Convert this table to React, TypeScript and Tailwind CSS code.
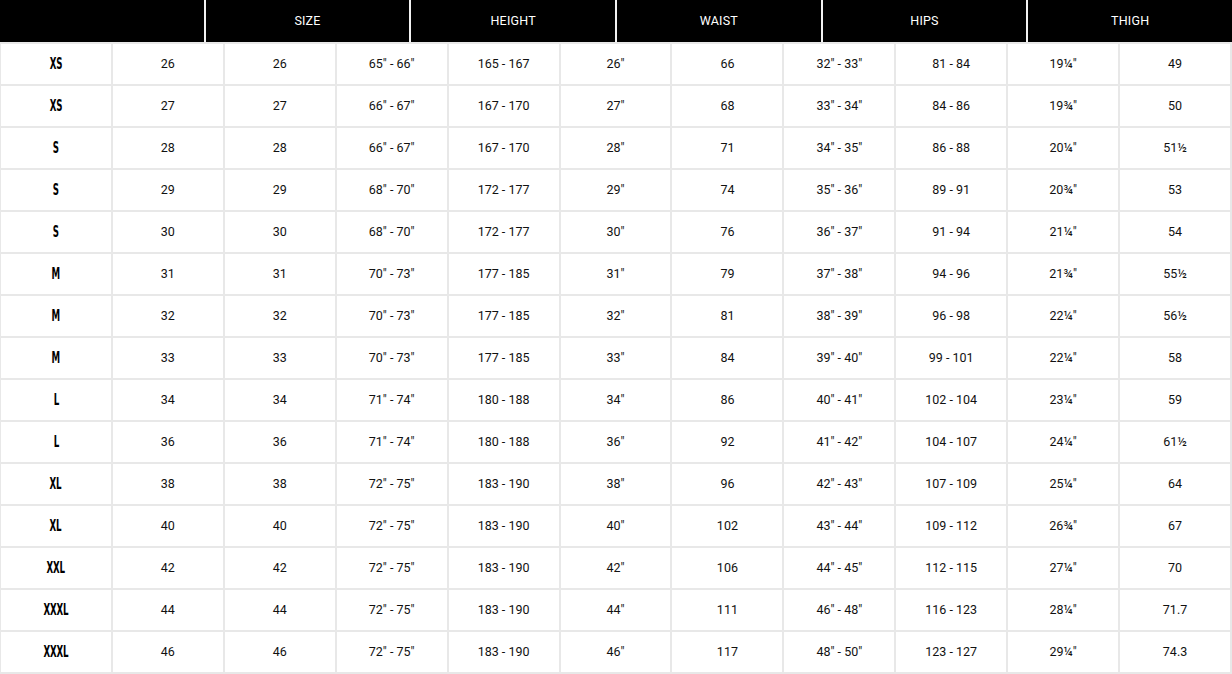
import React from "react";

const headers = ["", "SIZE", "HEIGHT", "WAIST", "HIPS", "THIGH"];

const rows: string[][] = [
  ["XS", "26", "26", "65\" - 66\"", "165 - 167", "26\"", "66", "32\" - 33\"", "81 - 84", "19¼\"", "49"],
  ["XS", "27", "27", "66\" - 67\"", "167 - 170", "27\"", "68", "33\" - 34\"", "84 - 86", "19¾\"", "50"],
  ["S", "28", "28", "66\" - 67\"", "167 - 170", "28\"", "71", "34\" - 35\"", "86 - 88", "20¼\"", "51½"],
  ["S", "29", "29", "68\" - 70\"", "172 - 177", "29\"", "74", "35\" - 36\"", "89 - 91", "20¾\"", "53"],
  ["S", "30", "30", "68\" - 70\"", "172 - 177", "30\"", "76", "36\" - 37\"", "91 - 94", "21¼\"", "54"],
  ["M", "31", "31", "70\" - 73\"", "177 - 185", "31\"", "79", "37\" - 38\"", "94 - 96", "21¾\"", "55½"],
  ["M", "32", "32", "70\" - 73\"", "177 - 185", "32\"", "81", "38\" - 39\"", "96 - 98", "22¼\"", "56½"],
  ["M", "33", "33", "70\" - 73\"", "177 - 185", "33\"", "84", "39\" - 40\"", "99 - 101", "22¼\"", "58"],
  ["L", "34", "34", "71\" - 74\"", "180 - 188", "34\"", "86", "40\" - 41\"", "102 - 104", "23¼\"", "59"],
  ["L", "36", "36", "71\" - 74\"", "180 - 188", "36\"", "92", "41\" - 42\"", "104 - 107", "24¼\"", "61½"],
  ["XL", "38", "38", "72\" - 75\"", "183 - 190", "38\"", "96", "42\" - 43\"", "107 - 109", "25¼\"", "64"],
  ["XL", "40", "40", "72\" - 75\"", "183 - 190", "40\"", "102", "43\" - 44\"", "109 - 112", "26¾\"", "67"],
  ["XXL", "42", "42", "72\" - 75\"", "183 - 190", "42\"", "106", "44\" - 45\"", "112 - 115", "27¼\"", "70"],
  ["XXXL", "44", "44", "72\" - 75\"", "183 - 190", "44\"", "111", "46\" - 48\"", "116 - 123", "28¼\"", "71.7"],
  ["XXXL", "46", "46", "72\" - 75\"", "183 - 190", "46\"", "117", "48\" - 50\"", "123 - 127", "29¼\"", "74.3"],
];

export default function App() {
  return (
    <div className="w-[1232px] h-[674px] bg-white overflow-hidden font-['Roboto','Liberation_Sans',sans-serif]">
      <div className="grid grid-cols-6 gap-[2px] bg-[#f2f2f2] h-[42px]">
        {headers.map((h, i) => (
          <div
            key={i}
            className="bg-black text-white text-[12.5px] flex items-center justify-center tracking-[0.2px]"
          >
            {h}
          </div>
        ))}
      </div>
      <div className="bg-[#e8e8e8] pt-[2px] pl-[1px] pr-[2px] pb-[2px] flex flex-col gap-[2px]">
        {rows.map((r, ri) => (
          <div key={ri} className="grid grid-cols-11 gap-[2px] h-[40px]">
            {r.map((c, ci) => (
              <div
                key={ci}
                className="bg-white flex items-center justify-center text-[#111] text-[12.5px]"
              >
                {ci === 0 ? (
                  <span className="inline-block pt-[2px] font-['DejaVu_Sans_Condensed','DejaVu_Sans',sans-serif] font-bold text-[15.5px] leading-none scale-x-[0.62] tracking-[-0.3px] text-black">
                    {c}
                  </span>
                ) : (
                  c
                )}
              </div>
            ))}
          </div>
        ))}
      </div>
    </div>
  );
}
